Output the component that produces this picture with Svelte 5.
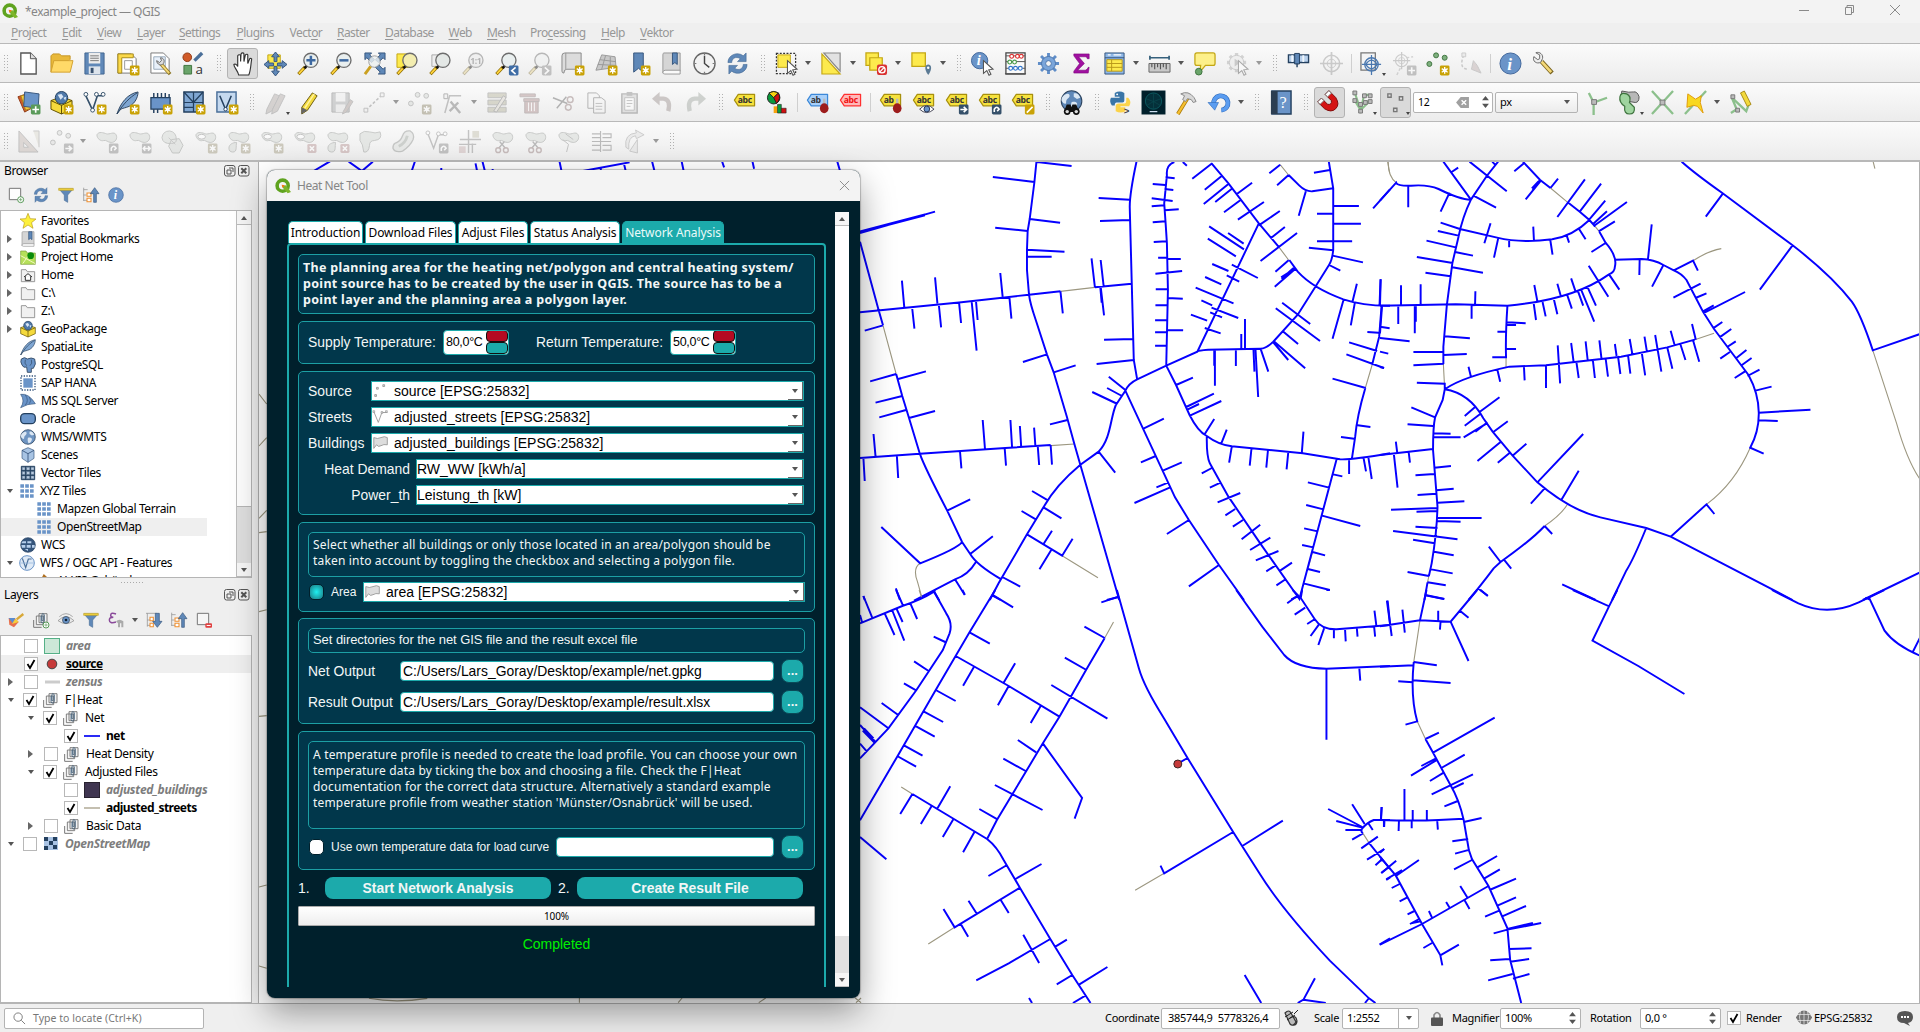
<script>
  // ---- shared icon fragments -------------------------------------------------
  const star = '<rect x="14.5" y="14" width="10" height="10.5" rx="1.5" fill="#c9a206"/><path d="M19.5 15.6v7.2M16.4 17.4l6.2 3.7M22.6 17.4l-6.2 3.7" stroke="#fff" stroke-width="1.4"/><circle cx="19.5" cy="19.2" r="1.9" fill="#fff"/>';
  const red = '<rect x="15" y="14.5" width="9.5" height="9.5" rx="1.5" fill="#d88a8a"/><path d="M17.5 17l4.5 4.5M22 17l-4.5 4.5" stroke="#fff" stroke-width="1.6"/>';
  const badge = (fill, d) => `<rect x="14.5" y="14" width="10" height="10.5" rx="1.5" fill="${fill}"/><path d="${d}" stroke="#fff" stroke-width="1.7" fill="none"/>`;
  const lens = (f = '#e9efef') => `<path d="M8.5 15.5l-7 7.5" stroke="#8a6a00" stroke-width="3.4"/><path d="M7 17l-5 5.5" stroke="#fdd23c" stroke-width="2"/><path d="M8 17l2-2.6" stroke="#111" stroke-width="2.8"/><circle cx="14.5" cy="8.7" r="7.4" fill="${f}" stroke="#6d6d6d" stroke-width="1.4"/>`;
  const blob = '<path d="M2 5C4 1 9 3 12 4s8-3 10 1-1 8-5 8-5-3-8-2-7-2-7-6z" fill="#cfd8cf" stroke="#8d938d" stroke-width="1"/>';
  const smallBlob = '<path d="M2 19c0-4 4-6 8-6-1 4 1 10-4 10-3 0-4-2-4-4z" fill="#cfd8cf" stroke="#8d938d"/>';
  const globe = (c = '#5f88b8') => `<circle cx="12" cy="12" r="9.5" fill="${c}" stroke="#2e4560"/><path d="M6 6c3-2 5 0 4 2s-3 2-3 5-3 1-4-1 1-5 3-6zM14 5c3-1 5 1 6 4l-3 1-3-2zM12 13c3-1 6 0 5 3s-3 4-4 4-2-5-1-7z" fill="#dbe7f3"/>`;
  const cursor = '<path d="M13 9l10 9-4.5.6 2.3 4.6-2 1-2.3-4.8-3.5 3z" fill="#fff" stroke="#555" stroke-width="1.1"/>';
  const tag = (f, s, t, txt = 'abc') => `<path d="M1.5 7.5l4-6h17v12h-17z" fill="${f}" stroke="${s}" stroke-width="1.3" stroke-linejoin="round"/><text x="5" y="11" font-size="9" font-weight="700" font-family="Open Sans" fill="${t}">${txt}</text>`;
  const pin = '<path d="M19 13V8" stroke="#bbb" stroke-width="2.5"/><ellipse cx="19" cy="18" rx="4.5" ry="5.3" fill="#9d1c1c"/>';
  const wrench = '<path d="M10 10l11 12" stroke="#7a6420" stroke-width="4.6"/><path d="M10 10l10 11" stroke="#f4d878" stroke-width="2.8"/><path d="M2 5l4 3 2-1V3L4 .8c4-1.600 8 2 7 6l-2 4c-4 2-9-1-7-6z" fill="#eee" stroke="#666"/>';
  const scissors = '<path d="M9 12l6 7M14 12l-6 7" stroke="#777" stroke-width="1.4"/><circle cx="7.500" cy="21" r="2.500" fill="none" stroke="#a77" stroke-width="1.5"/><circle cx="15.500" cy="21" r="2.500" fill="none" stroke="#a77" stroke-width="1.5"/>';
  const refresh = '<path d="M2 11C2 3 12-1 18 4l3-3v9h-9l3-3c-5-3-9 0-9 4zM22 13c0 8-10 12-16 7l-3 3v-9h9l-3 3c5 3 9 0 9-4z" fill="#5f88b8" stroke="#3e648f" stroke-width=".6"/>';
  const funnel = '<path d="M1.500 3h21l-8 9v11l-5-3v-8z" fill="#5f88b8" stroke="#4a6f99"/><path d="M1 2h22v3H1z" fill="#f2d33d" stroke="#b8981a" stroke-width=".8"/>';
  const info = '<circle cx="12" cy="12" r="11" fill="#6a94c8" stroke="#40659a"/><text x="8.500" y="18.500" font-size="18" font-style="italic" font-weight="700" font-family="Liberation Serif" fill="#fff">i</text>';
  const group = '<path d="M1 12v11h12" fill="none" stroke="#777" stroke-width="1.500"/><path d="M5 6h11v13H5zM9 2.500h12V16H9z" fill="#f4f4f4" stroke="#777" stroke-width="1.400"/><path d="M12 6v9q3 4 5-1V4q-3-4-4 1v8h2V5" fill="none" stroke="#45627c" stroke-width="1.300"/>';
  const target = '<circle cx="12" cy="12" r="8.500" fill="none" stroke="#999" stroke-width="1.600"/><circle cx="12" cy="12" r="4.500" fill="none" stroke="#999"/><path d="M12 0v24M0 12h24" stroke="#999" stroke-width="1.800"/>';
  const grid = '<path d="M2 2h5.500v5H2zM9.300 2h5.500v5H9.300zM16.500 2H22v5h-5.500zM2 9.500h5.500v5H2zM9.300 9.500h5.500v5H9.300zM16.500 9.500H22v5h-5.500zM2 17h5.500v5H2zM9.300 17h5.500v5H9.300zM16.500 17H22v5h-5.500z" fill="#6a94c8"/>';
  const book = '<path d="M4 1h17v19H6q-3 0-3 2V3q0-2 1-2z" fill="#d5d5d5" stroke="#999"/><path d="M3 21q0-2 3-2h15v4H5q-2 0-2-2z" fill="#fafafa" stroke="#999"/>';
  const folder = '<path d="M2 4h7l2 3h11v15H2z" fill="#f0f0f0" stroke="#8a8a8a" stroke-width="1.300"/>';
  const feather = '<path d="M1 24C5 12 12 3 23 1c0 6-4 14-12 16-3 1-5 1-7 3z" fill="#7fa6d2" stroke="#2e4560"/><path d="M1 24C8 13 14 7 22 2" stroke="#2e4560" fill="none"/>';
  const box = '<path d="M1 10l11-4 11 4v9l-11 5L1 19z" fill="#f5da3c" stroke="#5e4d00"/><path d="M1 10l11 5 11-5M12 15v9" fill="none" stroke="#5e4d00"/><circle cx="12" cy="7" r="6.500" fill="#4f79aa" stroke="#24405f"/><path d="M8 4l4-1 2 3-3 3zM14 7l3-1-1 4z" fill="#d8e6f5"/>';

  const I = {
    new: '<path d="M4 1h10l6 6v16H4z" fill="#fff" stroke="#555" stroke-width="1.400"/><path d="M14 1v6h6" fill="#ddd" stroke="#555"/>',
    open: '<path d="M1 21V4l2-2h7l2 2h9v4" fill="#e9b93a" stroke="#c69525"/><path d="M1 21L4 9h20l-3 12z" fill="#ffd968" stroke="#d2a130"/>',
    save: '<path d="M2 1h20v22H2z" fill="#5f88b8" stroke="#42658f"/><path d="M6 1h12v11H6z" fill="#ececec"/><path d="M7.500 4h9M7.500 6.500h9M7.500 9h9" stroke="#777"/><path d="M6 15h12v8H6z" fill="#dde4ec"/><path d="M8 16.500h3V22H8z" fill="#3a5270"/>',
    layout: '<path d="M2 2h14l5 5v15H2z" fill="#fff" stroke="#777"/><path d="M2 2h16v4H6v16H2z" fill="#fbd94a" stroke="#a88a15"/><path d="M9 9h8v9H9z" fill="none" stroke="#999"/>' + star,
    manager: '<path d="M2 1h13l6 6v15H2z" fill="#fff" stroke="#777"/><path d="M5 5h12v13H5z" fill="#e8f0fa" stroke="#9ab"/><path d="M12 12l10 11" stroke="#8c7422" stroke-width="3.600"/><path d="M12 12l9 10" stroke="#f4d878" stroke-width="2"/><path d="M8 9l3 2 2-2-1-3c3 0 5 3 3 6s-7 1-7-3z" fill="#ddd" stroke="#666"/>',
    style: '<circle cx="5.500" cy="5.500" r="4.500" fill="#d05a28" stroke="#8f3a16"/><path d="M13 9l8-8" stroke="#4a6f99" stroke-width="3.500"/><path d="M2 14h8v9H2z" fill="#6aa46a" stroke="#3f743f"/><text x="14" y="23" font-size="14" font-family="Open Sans" fill="#333">a</text>',
    hand: '<path d="M8 24c-1-5-5-8-5-11 1-1 3 0 4 2V4c1-2 3-1 3 0v6l.5-8c1-2 3-1 3 0v8l1.500-7c1-1 3-1 2.500 1v8l2-5c1-1 2.500 0 2 1-1 6-1 12-3 16z" fill="#fff" stroke="#333" stroke-width="1.200"/>',
    panSel: '<path d="M4 3h13v14H4z" fill="#fdea4d" stroke="#c3a613"/><path d="M12 0l4 5h-2.500v5h-3V5H8zM12 25l4-5h-2.500v-5h-3v5H8zM0 13l5-4v2.500h5v3H5V17zM24 13l-5-4v2.500h-5v3h5V17z" fill="#5f88b8" stroke="#35557c"/>',
    zin: lens() + '<path d="M14.500 4v9.500M9.800 8.700h9.500" stroke="#3d68a0" stroke-width="2.600"/>',
    zout: lens() + '<path d="M9.800 8.700h9.500" stroke="#3d68a0" stroke-width="2.600"/>',
    zfull: '<path d="M2 1h7L7 3l5 5-3 3-5-5-2 2zM23 1v7l-2-2-5 5-3-3 5-5-2-2zM23 23h-7l2-2-5-5 3-3 5 5 2-2z" fill="#5f88b8" stroke="#35557c"/><circle cx="12" cy="10" r="6" fill="#edf1f1" opacity=".8" stroke="#888"/><path d="M8 15l-6 8" stroke="#caa020" stroke-width="3"/>',
    zsel: '<path d="M1 2h12v14H1z" fill="#fdea4d" stroke="#c3a613"/>' + lens('#f3edb0'),
    zlayer: '<path d="M3 3h11v12H3z" fill="#eee" stroke="#aaa"/>' + lens('#e4e8e6'),
    znative: lens('#e8e8e8') + '<text x="8.500" y="12.500" font-size="9" font-weight="700" font-family="Open Sans" fill="#666">1:1</text>',
    zlast: lens() + badge('#3f6da6', 'M21.500 16l-4 3.500 4 3.500'),
    znext: lens() + badge('#888', 'M17.500 16l4 3.500-4 3.500'),
    newMap: '<path d="M4 1h17v17H6q-3 0-3 4-2 0-2-2V4q0-3 3-3z" fill="#dcdcdc" stroke="#888"/><path d="M5 1v17" stroke="#999"/>' + star,
    map3d: '<path d="M8 3l14 2 1 11-21 3z" fill="#c8c8c8" stroke="#999"/><path d="M6 8l16 2M4 13l19 1M12 4l-4 14M17 5l0 12" stroke="#999" fill="none"/>' + star,
    bmNew: '<path d="M7 1h10v20l-5-4-5 4z" fill="#5f88b8" stroke="#35557c"/>' + star,
    bm: book + '<path d="M13 1h5v12l-2.500-2-2.500 2z" fill="#5f88b8" stroke="#35557c"/>',
    clock: '<circle cx="12" cy="12" r="11" fill="#f2f2f2" stroke="#666" stroke-width="1.400"/><path d="M12 4v8l5 4" stroke="#444" fill="none" stroke-width="1.500"/><path d="M12 1.500v2M12 20.500v2M1.500 12h2M20.500 12h2" stroke="#777" stroke-width="1.300"/>',
    refresh,
    select: '<path d="M1.500 1.500h20v21h-20z" fill="none" stroke="#333" stroke-width="1.300" stroke-dasharray="2 1.500"/><path d="M3 3h13v13H3z" fill="#fdea4d" stroke="#c3a613"/>' + cursor,
    selExpr: '<path d="M2 2v21h19z" fill="#fdea4d" stroke="#c3a613" stroke-width="1.200"/><path d="M4 1h17v19z" fill="#e2e2e2" stroke="#888" stroke-width="1.200"/>',
    deselect: '<path d="M1 1h13v13H1z" fill="#fdea4d" stroke="#c3a613" stroke-width="1.300"/><path d="M5 6h13v13H5z" fill="#fdea4d" stroke="#c3a613" stroke-width="1.300"/><rect x="12.500" y="13" width="10.500" height="11" rx="2" fill="#d93030"/><circle cx="17.700" cy="18.500" r="3.300" fill="none" stroke="#fff" stroke-width="1.400"/><path d="M15.500 20.700l4.500-4.500" stroke="#fff" stroke-width="1.300"/>',
    selLoc: '<path d="M2 1h14v14H2z" fill="#fdea4d" stroke="#c3a613" stroke-width="1.300"/><path d="M19 24c-5-7-3-11 0-11s5 4 0 11z" fill="#5b7a94"/><circle cx="19" cy="16.500" r="1.300" fill="#fff"/>',
    identify: '<circle cx="9" cy="9" r="8.500" fill="#6a94c8" stroke="#40659a"/><text x="6" y="14" font-size="15" font-style="italic" font-weight="700" font-family="Liberation Serif" fill="#fff">i</text>' + cursor,
    calc: '<path d="M2 23h20V1H2z" fill="#fafafa" stroke="#444" stroke-width="1.300"/><path d="M2 4h20M2 10h20M2 17h20M1 22.500h22" stroke="#555"/><g stroke-width="1.200" fill="#fff"><g stroke="#d33"><circle cx="8" cy="4.500" r="2"/><circle cx="14" cy="4.500" r="2"/><circle cx="18" cy="4.500" r="2"/></g><g stroke="#4a9a4a"><circle cx="6" cy="10.500" r="2"/><circle cx="11" cy="10.500" r="2"/></g><g stroke="#37c"><circle cx="7" cy="17" r="2"/><circle cx="12" cy="17" r="2"/><circle cx="17" cy="17" r="2"/></g></g>',
    gear: '<path d="M12 1v22M1 12h22M4.200 4.200l15.600 15.600M19.800 4.200L4.200 19.800" stroke="#5f8dc8" stroke-width="3"/><circle cx="12" cy="12" r="7.300" fill="#7aa5da" stroke="#4a74aa"/><circle cx="12" cy="12" r="3" fill="#f4f4f4" stroke="#4a74aa"/>',
    sigma: '<path d="M4 2h16v5h-2q0-2-2-2H9l6 7-7 7h8q2 0 3-3h1l-1 6H4v-2l6-8-6-8z" fill="#a010a0" stroke="#780078" stroke-width=".6"/>',
    table: '<path d="M2 1h20v22H2z" fill="#8db6e6" stroke="#35557c"/><path d="M2 6h20" stroke="#35557c"/><path d="M5 3h3M11 3h8" stroke="#fff" stroke-width="1.500"/><path d="M4 8h16v12H4z" fill="#fdea4d" stroke="#b8981a"/><path d="M4 12h16M4 16h16M9 8v12" stroke="#b8981a"/>',
    measure: '<path d="M2 6h20M2 4v4M22 4v4" stroke="#35607c" stroke-width="1.800"/><path d="M1 12h22v9H1z" fill="#c9c9c9" stroke="#666"/><path d="M4 12v4M7 12v6M10 12v4M13 12v6M16 12v4M19 12v6" stroke="#555" stroke-width="1.200"/>',
    tip: '<path d="M4 1h17q2 0 2 2v9q0 2-2 2h-8l-6 7 1-7H4q-2 0-2-2V3q0-2 2-2z" fill="#fdf08a" stroke="#c3a613" stroke-width="1.300"/><circle cx="6" cy="20.500" r="3.500" fill="#6aa46a" stroke="#3f743f"/>',
    action: '<path d="M11 1v20M1 11h20M4 4l14 14M18 4L4 18" stroke="#aaa" stroke-width="3.500"/><circle cx="11" cy="11" r="7.500" fill="#e8e8e8" stroke="#999"/><path d="M9 7l6 4-6 4z" fill="#999"/>' + cursor,
    ruler: '<path d="M1.500 3h21v8h-21z" fill="#b8d0ec" stroke="#24405f" stroke-width="1.400"/><path d="M5.500 3.500v7M17 3.500v7" stroke="#eef5fc" stroke-width="2"/><path d="M8 1.500h5v11H8z" fill="#5f88b8" stroke="#24405f"/><path d="M10.500 12v4" stroke="#24405f" stroke-width="1.500"/>',
    target,
    gps: '<path d="M1 1h15v18H1z" fill="#f4f4f4" stroke="#777" stroke-width="1.300"/><circle cx="12" cy="13" r="7" fill="none" stroke="#4a78b0" stroke-width="1.400"/><path d="M12 3v21M2 13h20M6 13q6-9 12 0q-6 9-12 0" stroke="#4a78b0" stroke-width="1.300" fill="none"/>',
    gpsAdd: '<g transform="scale(.75)">' + target + '</g><path d="M4 24l4-8M14 6l7-1" stroke="#aaa" stroke-width="1.500" stroke-dasharray="3 2"/>' + badge('#888', 'M19.500 15.800v7M16 19.300h7'),
    points: '<g fill="#7fb07f" stroke="#3f743f"><circle cx="3.500" cy="12.500" r="2.600"/><circle cx="10.500" cy="3.500" r="2.600"/><circle cx="19.500" cy="6" r="2.600"/></g>' + star,
    track: '<path d="M5 3Q-1 18 10 18" fill="none" stroke="#999" stroke-width="1.600" stroke-dasharray="3 2"/><path d="M3 1h4v4H3z" fill="#ddd" stroke="#999"/><path d="M15 9l4 5 4 8-10-4z" fill="#caa" stroke="#999"/>',
    info, wrench,
    // second toolbar
    dsm: '<path d="M1 6l9-3 7 14-9 5z" fill="#d05a28" stroke="#8f3a16"/><path d="M4 5l10-2 4 14-9 3z" fill="#f5c93c" stroke="#a8821a"/><path d="M8 1l15 2-1 15-15-2z" fill="#6a94c8" stroke="#35557c"/>' + badge('#5a9a5a', 'M19.500 15.800v7M16 19.300h7'),
    gpkg: box + star,
    shp: '<path d="M3 5l7 15 5-15h6" fill="none" stroke="#35506a" stroke-width="1.700"/><g fill="#fff" stroke="#35506a"><circle cx="3" cy="3.500" r="2"/><circle cx="14" cy="3.500" r="2"/><circle cx="21" cy="3.500" r="2"/><circle cx="10" cy="20" r="2"/></g>' + star,
    feather: feather, spl: feather + star,
    mem: '<path d="M2 7h20v12H2z" fill="#6a94c8" stroke="#24405f" stroke-width="1.300"/><path d="M5 2v5M9 2v5M13 2v5M17 2v5M21 3v4M5 19v4M9 19v4" stroke="#24405f" stroke-width="1.500"/>' + star,
    mesh: '<path d="M2 1h20v21H2z" fill="#7fa6d2" stroke="#24405f" stroke-width="1.500"/><path d="M2 12h20M12 1v21M2 1l10 11L22 1M2 17h10" stroke="#24405f" fill="none" stroke-width="1.300"/>' + star,
    vlayer: '<path d="M2 1h20v21H2z" fill="#c5d9ef" stroke="#4a6f99" stroke-width="1.500"/><path d="M5 5l6 14 6-14" fill="none" stroke="#24405f" stroke-width="1.600"/><circle cx="11" cy="19" r="1.800" fill="#fff" stroke="#24405f"/>' + star,
    pencils: '<path d="M3 19L11 3l5 2-8 16-6 3z" fill="#b9a9a4" stroke="#888"/><path d="M9 19L17 3l5 2-8 16-6 3z" fill="#b9a9a4" stroke="#888"/>',
    pencil: '<path d="M5 17L16 2l5 3-10 15-6 4z" fill="#f2d93c" stroke="#6b5a10"/><path d="M5 17l-.5 7L11 20z" fill="#666"/><path d="M8 18L18 3" stroke="#fff3a0" stroke-width="1.500"/>',
    saveE: '<path d="M2 2h18v20H2z" fill="#a5a9ad" stroke="#777"/><path d="M6 2h10v9H6z" fill="#eee"/><path d="M6 14h10v8H6z" fill="#e4e4e4"/><path d="M14 21l7-12 3 2-7 11-4 2z" fill="#b9988f" stroke="#888"/>',
    line: '<path d="M3 20L20 4" stroke="#888" stroke-width="1.600" stroke-dasharray="3 2"/><path d="M1 18h4v4H1zM18 2h4v4h-4z" fill="#eee" stroke="#888"/>',
    addPt: '<g fill="#d0d8d0" stroke="#888"><circle cx="3" cy="13" r="2.500"/><circle cx="10" cy="4" r="2.500"/><circle cx="19" cy="5" r="2.500"/></g>' + star.replace('#c9a206', '#99894a'),
    vertex: '<path d="M4 23l5-18h12" fill="none" stroke="#888" stroke-width="1.600"/><path d="M3 3h4v5H3z" fill="#eee" stroke="#666"/><path d="M9 21l9-9M10 11l10 12" stroke="#777" stroke-width="2.500"/>',
    formEdit: '<path d="M2 2h19v5H2zM2 9.500h19v5H2zM2 17h19v5H2z" fill="#b9b680" stroke="#888"/><path d="M8 21l10-16 3 2-10 15z" fill="#e0d6c0" stroke="#777"/>',
    trash: '<path d="M1 3h16v3H1zM5 8h16v3H5zM6 11h14v12H6z" fill="#cc8888" stroke="#977"/><path d="M10 12v9M13 12v9M16 12v9" stroke="#fff"/>',
    cut: '<path d="M1 7l15 6M5 18l10-12" stroke="#666" stroke-width="1.500"/><circle cx="19" cy="9" r="3" fill="none" stroke="#a77" stroke-width="1.500"/><circle cx="17" cy="17" r="3" fill="none" stroke="#a77" stroke-width="1.500"/>',
    copy: '<path d="M3 2h9l3 3v13H3z" fill="#f4f4f4" stroke="#666"/><path d="M9 7h8l4 3v13H9z" fill="#f4f4f4" stroke="#666"/><path d="M11 13h7M11 16h7M11 19h7" stroke="#888"/>',
    paste: '<path d="M4 3h16v20H4z" fill="#ccc" stroke="#777" stroke-width="1.500"/><path d="M9 1h6v4H9z" fill="#888"/><path d="M7 7h10v13H7z" fill="#fff" stroke="#888"/><path d="M9 10h6M9 13h6M9 16h4" stroke="#888"/>',
    undo: '<path d="M7 8h6q8 1 5 13" fill="none" stroke="#a8908c" stroke-width="4.500"/><path d="M9 1v14L1 8z" fill="#a8908c"/>',
    redo: '<path d="M17 8h-6q-8 1-5 13" fill="none" stroke="#9caa9c" stroke-width="4.500"/><path d="M15 1v14l8-7z" fill="#9caa9c"/>',
    lab: '<g transform="translate(0 2)">' + tag('#f6e23e', '#a8900e', '#333') + '</g>',
    diag: '<circle cx="8" cy="7" r="6.500" fill="#0a9a3c" stroke="#222"/><path d="M8 7L3 2q5-3 10 0z" fill="#f6d20c" stroke="#222"/><path d="M8 7l5-5q3 6-2 11z" fill="#d01010" stroke="#222"/><path d="M8 23v-7h4v7z" fill="#f6a20c"/><path d="M12 23v-9h4v9z" fill="#0a9a3c" stroke="#222" stroke-width=".6"/><path d="M16 23v-5h5v5z" fill="#d01010" stroke="#222" stroke-width=".6"/>',
    labPin: '<g transform="translate(0 2)">' + tag('#a8d0fa', '#3c88d8', '#333', 'ab') + '</g>' + pin,
    labRed: '<g transform="translate(0 2)">' + tag('#ffb8b8', '#ff3030', '#f01010') + '</g>',
    labPinY: '<g transform="translate(0 2)">' + tag('#f6e23e', '#a8900e', '#333', 'ab') + '</g>' + pin,
    labEye: '<g transform="translate(0 2)">' + tag('#f6e23e', '#a8900e', '#333') + '</g><path d="M8 19q7-8 15 0q-8 7-15 0z" fill="#fff" stroke="#445"/><circle cx="15.500" cy="18.800" r="3" fill="#6a94c8" stroke="#235"/>',
    labMove: '<g transform="translate(0 2)">' + tag('#f6e23e', '#a8900e', '#333') + '</g>' + badge('#35506a', 'M16 19.300h6M19.500 16.500l3 2.800-3 2.800'),
    labRot: '<g transform="translate(0 2)">' + tag('#f6e23e', '#a8900e', '#333') + '</g>' + badge('#35506a', 'M17 22v-3q2.500-4 5 0l-2 2'),
    labEd: '<g transform="translate(0 2)">' + tag('#f6e23e', '#a8900e', '#333') + '</g>' + badge('#c9a206', 'M16.500 22.500l6-6'),
    search: '<g transform="translate(-1.500 -3) scale(1.130)">' + globe('#5f88b8') + '</g><path d="M4 22l3-8h4l1 3 1-3h4l3 8z" fill="#111"/><circle cx="7.500" cy="21.500" r="3.500" fill="#111"/><circle cx="17" cy="21.500" r="3.500" fill="#111"/><circle cx="7.500" cy="21.500" r="1.800" fill="#ddd"/><circle cx="17" cy="21.500" r="1.800" fill="#ddd"/>',
    py: '<path d="M6 2q5-3 10 0v8q0 2-2 2H8q-2 0-2 3H3q-3-4-1-8h9V6H6z" fill="#3a76a8"/><path d="M18 7h2q4 4 1 9h-9v1h5v4q-5 3-10 0v-5q0-3 3-3h6q2 0 2-3z" fill="#fbd34a"/><circle cx="8.500" cy="3.500" r="1" fill="#fff"/><text x="15.500" y="24" font-size="10" font-weight="700" font-family="Liberation Sans" fill="#444">&gt;</text>',
    heat: '<path d="M-.5-.5h25v25h-25z" fill="#00202b"/><circle cx="12" cy="10.500" r="8.500" fill="#04303a" stroke="#0b5a60"/><path d="M12 2v17M4 8l8 3 8-3M5 15l7-4 7 4" stroke="#0b4a50" stroke-width=".7" fill="none"/><path d="M8 21.500h8" stroke="#cde" stroke-width="1.300"/>',
    hammer: '<path d="M3 24L14 6" stroke="#a87808" stroke-width="4"/><path d="M3 24L14 6" stroke="#f6c030" stroke-width="2.500"/><path d="M6 3q8-4 14 4l2 4-3 1-2-3-4-1-2 3-3-2 2-4z" fill="#d8d8d8" stroke="#888"/>',
    reload: '<path d="M6 14A7.500 7.500 0 1 1 14 20" fill="none" stroke="#2c68b8" stroke-width="5"/><path d="M6 14A7.500 7.500 0 1 1 14 20" fill="none" stroke="#5a9cf0" stroke-width="3.800"/><path d="M0 12h11l-4 8z" fill="#5a9cf0" stroke="#2c68b8" stroke-width=".6"/>',
    help: '<path d="M3 0h20v24H3z" fill="#6a94c8" stroke="#24405f" stroke-width="1.500"/><path d="M2 0h7v24H2z" fill="#2c3e52"/><text x="11" y="18" font-size="17" font-family="Liberation Serif" fill="#fff">?</text>',
    magnet: '<g transform="rotate(-45 12 12) translate(12 12) scale(.92) translate(-12 -12)"><path d="M3 2h6v10q3 4 6 0V2h6v11q-2 9-9 9t-9-9z" fill="#d41414" stroke="#7a0808"/><path d="M3 2h6v4H3zM15 2h6v4h-6z" fill="#fff" stroke="#777"/></g>',
    vseg: '<path d="M4 2l6 18 4-17M4 10l6 10 8-8M14 4h7M14 11h7" stroke="#8cc08c" stroke-width="2.200" fill="none"/><g fill="#bbb" stroke="#777"><path d="M2 0h4v4H2zM2 8h4v4H2zM8 19h4v4H8zM12 3h4v4h-4zM18 3h4v4h-4zM13 10h4v4h-4zM18 9h4v4h-4zM8 12h4v4H8z"/></g>',
    pts: '<g fill="#ddd" stroke="#777" stroke-width="1.400"><path d="M4 3h3.500v3.500H4zM16 6h3.500v3.500H16zM10 18h3.500v3.500H10z"/></g>',
    topo: '<path d="M4 2l5 10 14-5M9 12v13" stroke="#8cc08c" stroke-width="2.400" fill="none"/><path d="M7 9h5v5H7z" fill="#bbb" stroke="#777"/>',
    overlap: '<path d="M4 0q8 2 12 1t6 5q0 6-4 6l-6-1-9-5z" fill="#b8b8b8" stroke="#555"/><path d="M2 6q1-5 7-3 5 2 3 9 2 2 5 5 1 7-5 7-6 0-5-8Q1 12 2 6z" fill="#9fd49f" stroke="#3f743f" stroke-width="1.300"/>',
    inter: '<path d="M1 0l22 24M23 0L1 24" stroke="#8cc08c" stroke-width="2.400"/><path d="M9.500 9.500h5v5h-5z" fill="#bbb" stroke="#777"/>',
    trace: '<path d="M23 0L1 24" stroke="#8cc08c" stroke-width="2.400"/><path d="M4 3l8 5.500 6-3.500-1 7 3 11-6-7-4-1-7 2z" fill="#f8d820" stroke="#e09a08"/>',
    selfs: '<path d="M2 23l6-4L3 7l15 14 3-8" stroke="#8cc08c" stroke-width="2.400" fill="none"/><path d="M2 4h4v4H2zM7 18h4v4H7z" fill="#bbb" stroke="#777"/><path d="M12 2l4-2 7 14-4 2z" fill="#f2d93c" stroke="#a88a15"/>',
    // third toolbar
    tri: '<path d="M2 1v22h20zM7 13v5h5z" fill="#d0b4a8" fill-rule="evenodd" stroke="#888"/><path d="M17 1h6v17" fill="#ddd8c0" stroke="#999"/>',
    movePts: '<g fill="#d7dcd7" stroke="#888"><circle cx="3" cy="13" r="2.500"/><circle cx="10" cy="3" r="2.500"/><circle cx="19" cy="6" r="2.500"/></g>' + badge('#888', 'M16 19.300h6M19.500 16.500l3 2.800-3 2.800'),
    rot: blob + badge('#888', 'M17 22v-3q2.500-4 5 0l-2 2'),
    scale: blob + badge('#888', 'M16 19.300h7M18 17l-2 2.300 2 2.300M21 17l2 2.300-2 2.300'),
    simp: '<path d="M1 8q1-7 8-7 7 1 7 9 0 4-5 4-9 1-10-6zM11 10l8-1 4 7-4 8h-7l-4-7z" fill="#cfd8cf" stroke="#8d938d"/><path d="M8 8l7 7" stroke="#999"/>',
    ring: blob + '<ellipse cx="8" cy="7" rx="4" ry="2.500" fill="#fff" stroke="#888"/>' + star.replace('#c9a206', '#a99a60'),
    part: blob + smallBlob + star.replace('#c9a206', '#a99a60'),
    delRing: blob + '<ellipse cx="8" cy="7" rx="4" ry="2.500" fill="#fff" stroke="#888"/>' + red,
    delPart: blob + smallBlob + red,
    reshape: '<path d="M1 4q4-4 10-2t11 0q3 8-6 9-5 0-5 5-1 8-6 7-1-9-4-12z" fill="#cfd8cf" stroke="#8d938d"/>',
    offset: '<path d="M3 14q6-2 8-8t8-5q5 3 3 9-3 7-11 12-8 2-10-3 0-4 2-5z" fill="#d8ded8" stroke="#8d938d" stroke-width="1.400"/><path d="M7 17q7-3 9-11" stroke="#9a9" stroke-width="3" fill="none"/>',
    rev: '<path d="M3 4l6 15 5-14h7" fill="none" stroke="#888" stroke-width="1.500"/><g fill="#fff" stroke="#888"><circle cx="3" cy="3" r="2"/><circle cx="14" cy="4" r="2"/><circle cx="21" cy="4" r="2"/></g>' + badge('#888', 'M17 22v-3q2.500-4 5 0l-2 2'),
    trim: '<path d="M11 0v24M2 10h22M15 14v10M1 15h18" stroke="#888" stroke-width="1.500"/><rect x="15" y="1" width="7" height="7" fill="#c9c09a"/><rect x="1" y="17" width="7" height="7" fill="#daa"/>',
    split: blob + scissors,
    merge: blob + '<path d="M6 10l6 5-2 8M9 4l8 6" stroke="#888" fill="none"/>',
    attr: '<path d="M2 4h9v4H2M13 4h9v4h-9M2 12h20M2 16h9v5H2M13 16h9v5h-9M11 1v22" stroke="#777" fill="none" stroke-width="1.200"/>',
    rotSym: '<path d="M3 18Q1 4 14 3l-1-3 9 5-8 4-1-3Q5 7 6 20zM7 22l8-12v14z" fill="#ddd" stroke="#999"/>',
    // panels
    addLayer: '<path d="M2 2h17v17H2z" fill="#fdfdfd" stroke="#777" stroke-width="1.500"/><circle cx="19" cy="19" r="4.500" fill="#fff" stroke="#5a9a5a" stroke-width="1.500"/><path d="M19 16.500v5M16.500 19h5" stroke="#5a9a5a"/>',
    funnel,
    collapse: '<path d="M1 1v20M1 4h6M1 12h4M1 20h6" stroke="#888" fill="none"/><path d="M6 9h6v5H6zM6 17h6v5H6z" fill="#fff" stroke="#f09030" stroke-width="1.600"/><path d="M16 23V10h-5L17.500 1 24 10h-4v13z" fill="#5f88b8" stroke="#35557c"/>',
    expand: '<path d="M0 2h16M2 2v20M2 12h4M2 20h6" stroke="#888" fill="none"/><path d="M6 8h5v5H6zM6 17h5v5H6z" fill="#fff" stroke="#f09030" stroke-width="1.600"/><path d="M14 2h6v12h4l-7 9-7-9h4z" fill="#5f88b8" stroke="#35557c"/>',
    brush: '<path d="M13 11l10-8" stroke="#d8a838" stroke-width="3.500"/><path d="M1 9l9 0 6 6-7 8-7-4z" fill="#e8704c"/><path d="M1 9l6 8 4-8z" fill="#5a8cd0"/><path d="M6 18l5-8 5 5z" fill="#f5cf3c"/>',
    addGroup: group + '<circle cx="19.500" cy="19.500" r="4.500" fill="#fff" stroke="#5a9a5a" stroke-width="1.500"/><path d="M19.500 17v5M17 19.500h5" stroke="#5a9a5a"/>',
    eye: '<path d="M0 13Q12 1 24 13 12 22 0 13z" fill="#e8e8e8" stroke="#888"/><circle cx="12" cy="12" r="5.300" fill="#6a94c8" stroke="#345"/><circle cx="12" cy="12" r="2" fill="#123"/><path d="M2 7Q12-2 22 7" fill="none" stroke="#aaa" stroke-width="1.500"/>',
    eps: '<path d="M12 3Q4 0 4 5q0 3 4 3-6 0-6 4 0 6 10 3" fill="none" stroke="#8a4a9a" stroke-width="2.200"/><path d="M12 14q5-5 11 0v9h-3v-6h-2v6h-3v-6z" fill="#aaa"/>',
    remove: '<path d="M2 2h17v17H2z" fill="#f6f6f6" stroke="#777" stroke-width="1.500"/><rect x="14" y="17" width="10" height="6.500" rx="1.500" fill="#e04040"/><path d="M16 20.200h6" stroke="#fff" stroke-width="1.500"/>',
    // tree
    fav: '<path d="M12 .5l3.300 8 8.700.5-6.700 5.500 2.200 8.500L12 18l-7.500 5 2.200-8.500L0 9l8.700-.5z" fill="#fdf03c" stroke="#b89a1a"/>',
    home: folder + '<path d="M6 15l6-5 6 5M8 14v6h8v-6" fill="#fff" stroke="#222" stroke-width="1.400"/>',
    proj: '<path d="M1 3h8l2 3h12v17H1z" fill="#b6e05a" stroke="#79993a"/><path d="M1 10l22 12M14 8L4 22" stroke="#f3f7c0" stroke-width="1.500"/><circle cx="16" cy="10" r="5" fill="#0a8a0a"/>',
    folder, gp: box,
    pg: '<path d="M2 3q5-4 9 0 6-3 11 0 3 8-2 14h-3v6h-6l-1-8q-5 2-7-3-3-5-1-9z" fill="#6a94c8" stroke="#2e4560" stroke-width="1.300"/><path d="M8 4q-2 6 2 9M17 4q2 6-2 9" stroke="#2e4560" fill="none"/>',
    hana: '<path d="M5 5h14v14H5z" fill="#6a94c8"/><path d="M1.500 1.500h21v21h-21z" fill="none" stroke="#35557c" stroke-width="2" stroke-dasharray="2 2"/>',
    ms: '<path d="M1 2q12-2 22 14-12 0-22 6Q8 12 1 2z" fill="#6a94c8" stroke="#35557c"/><path d="M8 3q6 8 0 15M14 6q4 6 0 10" fill="none" stroke="#35557c"/>',
    ora: '<rect x="1" y="4" width="22" height="15" rx="6" fill="#6a94c8" stroke="#24405f" stroke-width="2"/>',
    wms: '<g transform="translate(-1.800 -1.800) scale(1.150)">' + globe('#6f95c2') + '</g>',
    scene: '<path d="M12 1l9 4v12l-9 6-9-6V5z" fill="#a8c4e4" stroke="#35557c"/><path d="M3 5l9 5 9-5M12 10v13" fill="none" stroke="#35557c" stroke-width="1.300"/>',
    vt: '<path d="M2 2h20v20H2z" fill="#6f86a0" stroke="#24405f" stroke-width="1.500"/><path d="M2 8.500h20M2 15.500h20M8.500 2v20M15.500 2v20" stroke="#24405f" stroke-width="1.500"/><path d="M4 4h3v3H4zM10.500 4h3.500v3h-3.500zM17 4h3.500v3H17zM4 10.500h3v3H4zM10.500 10.500h3.500v3h-3.500zM17 10.500h3.500v3H17zM4 17h3v3H4zM10.500 17h3.500v3h-3.500zM17 17h3.500v3H17z" fill="#b8cade"/>',
    xyz: grid,
    wcs: '<circle cx="12" cy="12" r="11" fill="#35557c" stroke="#24405f"/><path d="M4 6.500h5v3H2zM11 6.500h6v3h-6zM2 12h6v4H3zM10 12h6v4h-6zM18 12h4v4h-4zM7 18h5v3z" fill="#b8d0ec"/>',
    wfs: '<circle cx="12" cy="12" r="11" fill="#dfeaf6" stroke="#6a94c8" stroke-width="1.500"/><path d="M5 5l5 14 4-13h5" fill="none" stroke="#4a6f99" stroke-width="1.800"/><path d="M2 12h20" stroke="#8fb0d8"/>',
    elbow: '<path d="M2 22l10-18 9 8" stroke="#b07020" stroke-width="3" fill="none"/>',
    group,
    qgis: '<circle cx="11.500" cy="11.500" r="8.300" fill="none" stroke="#5fa31f" stroke-width="5.400"/><path d="M12 12l4-1 8 10-5 2-7-8z" fill="#7cb52a"/><path d="M10 10l5 1-4 4z" fill="#ee7913"/>',
  };

  // ---- toolbars ----------------------------------------------------------------
  // "|" is a drag handle, "/" a separator, a trailing "v" opens a menu beside the
  // button, "~" disables it, "!" marks it checked, "." puts a menu tick inside it
  const row1 = 'new open save layout manager style | hand! panSel zin zout zfull zsel zlayer znative~ zlast znext~ newMap map3d bmNew bm clock refresh | selectv selExprv deselectv selLocv | identify calc gear sigma tablev measurev tip action~v | ruler target~ / gps. gpsAdd~ points track~ / info wrench'.split(' ');
  const row2a = 'dsm gpkg shp spl mem mesh vlayer | pencils~. pencil saveE~ line~v addPt~ vertex~v formEdit~ trash~ cut~ copy~ paste~ undo~ redo~ | lab diag / labPin labRed / labPinY labEye labMove labRot labEd | search | py heat hammer reloadv | help | magnet! vseg. pts!.'.split(' ');
  const row2b = 'topo overlap. inter tracev selfs'.split(' ');
  const row3 = 'tri~ movePts~v rot~ scale~ simp~ ring~ part~ ring~ delRing~ delPart~ reshape~ offset~ rev~ trim~ split~ split~ merge~ attr~ rotSym~v |'.split(' ');

  const parse = (t) => ({
    name: t.replace(/[~!.]|v$/g, ''),
    menu: /v$/.test(t) && !I[t],
    off: t.includes('~'), on: t.includes('!'), tick: t.includes('.')
  });

  const menus = [['', 'P', 'roject', 51], ['', 'E', 'dit', 35], ['', 'V', 'iew', 40], ['', 'L', 'ayer', 42], ['', 'S', 'ettings', 57.5], ['', 'P', 'lugins', 53], ['Vect', 'o', 'r', 47.500], ['', 'R', 'aster', 48], ['', 'D', 'atabase', 63.500], ['', 'W', 'eb', 38.500], ['', 'M', 'esh', 43], ['Pro', 'c', 'essing', 71], ['', 'H', 'elp', 39], ['', 'V', 'ektor', 50]];

  const browser = [
    ['', 'fav', 'Favorites'], ['r', 'bm', 'Spatial Bookmarks'], ['r', 'proj', 'Project Home'], ['r', 'home', 'Home'],
    ['r', 'folder', 'C:\\'], ['r', 'folder', 'Z:\\'], ['r', 'gp', 'GeoPackage'], ['', 'feather', 'SpatiaLite'],
    ['', 'pg', 'PostgreSQL'], ['', 'hana', 'SAP HANA'], ['', 'ms', 'MS SQL Server'], ['', 'ora', 'Oracle'],
    ['', 'wms', 'WMS/WMTS'], ['', 'scene', 'Scenes'], ['', 'vt', 'Vector Tiles'], ['d', 'xyz', 'XYZ Tiles'],
    ['', 'xyz', 'Mapzen Global Terrain', 1], ['', 'xyz', 'OpenStreetMap', 1, 1], ['', 'wcs', 'WCS'],
    ['d', 'wfs', 'WFS / OGC API - Features'], ['r', 'elbow', 'ALKIS Gebäude', 1]
  ];

  // arrow, indent level, checked, symbol, label, style class
  const layers = [
    ['', 0, 0, 'area', 'area', 'it'], ['', 0, 1, 'dot', 'source', 'bu'], ['r', 0, 0, 'gline', 'zensus', 'it'],
    ['d', 0, 1, 'group', 'F|Heat', ''], ['d', 1, 1, 'group', 'Net', ''], ['', 2, 1, 'bline', 'net', 'b'],
    ['r', 1, 0, 'group', 'Heat Density', ''], ['d', 1, 1, 'group', 'Adjusted Files', ''],
    ['', 2, 0, 'dark', 'adjusted_buildings', 'it'], ['', 2, 1, 'sline', 'adjusted_streets', 'b'],
    ['r', 1, 0, 'group', 'Basic Data', ''], ['d', 0, 0, 'osm', 'OpenStreetMap', 'it']
  ];

  // ---- map geometry, one tile per block ---------------------------------------
  const tiles = [
    { x: 260, y: 160, sx: 610 / 1568, net: 'M138 33L180 4M228 5L262 33L290 5M398 5L390 33M466 24V33M554 10L558 33M572 5L578 33M598 27V33M770 5L775 33M830 33L950 7M876 22V33M935 8L940 33M1008 5L1014 33M1084 5L1089 33M1188 5L1193 22M1266 5L1270 26M1484 5L1491 33', old: '' },
    {
      x: 860, y: 160, sx: 530 / 1568,
      net: `M522 5L516 66L502 177L496 213L494 270V330L500 404Q503 430 520 480L553 583L573 637L612 770L634 851L652 915L767 1320
M524 6L626 18M393 51L516 66M502 177L592 188M400 203L496 213M494 269L605 275M494 290H567M553 583L482 606M573 637L638 616M562 793L614 780
M0 217L192 166M0 214L192 163M0 219L222 155M0 245L55 450L68 496M0 457L300 427L500 404L593 394M695 382L804 371M124 362L131 442M222 352L229 430M415 339L422 410M154 441L161 506M233 432L240 502M293 427L299 489M330 421L345 572M343 421L348 480M442 412L448 476M593 394L600 460M685 295L695 382M712 300L721 380M712 380L722 466M711 382L715 428M68 496L14 512
M107 642L125 708L145 774L177 881Q190 920 258 1052L302 1146L326 1182Q345 1215 418 1258M30 664L107 642M113 657L195 634M46 728L125 708M57 772L136 750M145 774L222 753M258 1052L326 1018M326 1182L393 1129M302 1146Q290 1165 178 1210L63 1101
M0 894L177 881L430 864L564 855M40 822L46 890M10 893L14 963M109 886L113 954M296 876L300 925M363 780L370 870M428 864L432 917M445 780L450 864M473 798L477 862M515 803L519 860M526 860L530 915M564 855L568 914
M818 5Q798 100 798 140L804 370L810 600L820 658M706 114L798 119M710 183L798 180M722 539L809 537M700 612L810 600
M930 6Q905 15 908 45L900 130Q905 200 908 250L911 390L906 617M820 658L906 617L998 575L1180 190M955 6L967 17M866 72L903 75M904 52L931 55M901 87L927 90M863 115L925 123M863 139L901 136M901 151L943 148M866 187L905 184M869 246L907 244M882 293H909M909 297H949M874 341L953 333M875 388H910M910 414L955 416M874 436H909M873 481H908M908 510L956 511M873 517H907M873 557H906
M1040 10L1090 70L1180 190L1240 262M1270 300L1295 335Q1340 385 1430 418Q1490 438 1568 437M1042 10L983 56M1070 48L1020 89M1090 72L1017 132M1100 86L1051 126M1160 68L1115 102M1126 120L1077 157M1195 126L1118 179M1242 153L1180 196M1257 201L1215 235M1293 219L1185 303M1268 301L1229 335M1286 321L1247 356M1288 325L1246 352M1290 325L1227 380M1243 14L1211 40M1268 45L1234 76M1268 45L1300 77Q1318 95 1338 94L1400 85M1319 94L1298 167
M1387 5L1400 85V270Q1397 300 1388 314L1345 384L1295 464L1222 546Q1200 566 1185 566L1030 569Q1000 571 998 575M1343 38L1390 30M1400 138H1476M1352 161H1400M1400 191H1482M1352 244H1456M1328 263L1400 271M1398 287L1488 307M1388 315L1421 332M1249 428L1332 492M1230 445L1361 543M1250 513L1296 552M1222 546L1267 600M1226 545L1317 625M1185 566L1208 635
M1033 199L1136 268M1089 219L1135 251M1029 236L1112 289M1100 314L1177 354M1042 312L1090 333M1021 351L1069 373M1085 346L1122 365M993 383L1105 430M1010 421L1042 436M1040 443L1119 474M1036 457L1071 472M979 464L1027 482M1020 504L1067 520M1048 569V617M1050 569V677M1112 569V618M1128 522V569M1139 477V569M1164 567L1167 635M1170 567L1178 711
M820 658Q795 670 785 692L757 735C740 775 743 835 706 875L652 914Q580 975 545 1038L494 1123L410 1270L384 1320M736 650L785 690M731 684L775 708M687 696L762 732M706 875L755 938M509 993L556 1021M543 1042L596 1075M478 1053L520 1078M494 1123L598 1187L629 1136M543 1152L568 1112M568 1166L531 1228M421 1251L474 1280M391 1306L416 1320
M785 692L932 1012L973 1080L1062 1215L1136 1320M899 776L840 805M875 888L831 907M896 932L952 907M911 968L877 982M916 983L812 1029M973 1080L908 1122M1062 1215L973 1279M730 1320L765 1311
M906 617L935 675L975 765Q1000 815 1026 828Q1060 854 1100 859L1310 880L1420 898Q1455 900 1568 880M985 653L935 675M1047 701L965 741M1003 732L970 748M1069 723L976 767M1048 777L1020 822M1085 809L1069 850M1100 859L1092 908M1158 867L1153 917M1207 870L1202 923M1267 877L1262 928M1312 815L1307 880
M1026 828Q1025 890 1035 910L1090 1010L1184 1150L1300 1317L1410 898M1011 940L1041 924M1035 983L1068 967M1058 1027L1125 999M1081 1066L1110 1047M1103 1100L1133 1080M1129 1138L1184 1094M1154 1170L1214 1133M1171 1201L1238 1173M1202 1234L1230 1216M1278 1208L1243 1232M1232 1276L1260 1257M1276 1318L1297 1308
M1400 943L1427 949M1325 967L1388 983M1320 1035L1371 1048M1367 1067L1480 1098M1314 1105L1354 1114M1308 1155L1341 1162M1339 1176L1376 1186M1325 1227L1361 1236M1315 1271L1390 1290
M1543 438L1536 530L1515 615M1495 684Q1470 770 1465 830L1455 898M1431 418L1398 536M1470 371L1457 425M1464 428L1452 496M1540 358L1537 437M1501 516L1534 518M1447 547L1530 573M1439 583L1550 624M1398 656L1496 684M1467 795L1510 801M1423 831L1462 836M1447 899V942M1490 895L1497 934M1504 892L1514 957M1568 88L1518 145
M343 1206Q320 1245 281 1258L160 1322M281 1258L310 1305M106 1285L118 1320M218 1292L235 1322M10 1308L14 1320`,
      old: 'M593 394L695 382M68 496L107 642M564 857L634 852M178 1210Q155 1225 170 1265L183 1312M598 1187L704 1253M1240 262L1268 300M1243 14L1268 45M1515 615L1495 684M1339 1176L1325 1227M1561 5L1567 40'
    },
    {
      x: 1380, y: 160, sx: 540 / 1568,
      net: `M0 122L47 68Q50 78 90 77Q140 73 170 87Q235 120 264 119Q240 170 228 230L210 310L194 436L184 560V612M82 77V142M202 98L176 155M184 5L264 119M208 36L227 23M326 5L334 14M260 5L368 94M343 5L310 48L264 119M270 106L337 143
M176 188L232 207M168 213L228 227M135 242L220 262M107 291L211 309M132 338L205 349M218 276L270 287M210 322L299 338
M232 207L340 233Q410 250 500 238Q560 228 608 180M321 190L303 250M343 236L331 293M375 240V262M445 200L447 242M494 237L501 284M542 226L549 248M578 207L597 238
M415 5L465 60L495 84M545 127L580 155L608 180L625 200M637 215L655 248Q690 290 682 320Q682 335 665 343Q560 420 370 437L220 433L0 437M418 10L390 34M463 62L443 90M460 64L441 85M467 62L423 118M517 56L495 84M595 58L515 171M642 71L580 155M654 122L608 178M717 126L620 199M659 154L618 193M682 184L635 214M655 249L614 276M606 317L663 410M665 343L695 389M555 355L567 392M515 371L525 408M448 375L457 424M446 428L453 480M472 426L481 469M504 414L515 463M543 403L557 446M575 394L590 437M584 389L622 485M602 380L627 437
M682 299L760 297Q795 298 823 315L853 331Q875 340 890 360L938 455L970 507L1070 645C1110 720 1108 800 1075 863L1114 881M789 193L778 298M754 298L753 345M823 315L790 380M853 331L909 302L923 332M852 413L931 371M916 414L948 400M938 460L1060 396M938 454L969 436M967 505L994 486M986 532L1020 507M1008 561L1033 544M1032 596L1064 570M988 596L1016 576M1047 618L1079 594M1030 654L1060 634M1067 648L1102 629M1090 692L1137 680M1100 758L1250 749M1100 781L1155 783
M2 358L0 436M61 376V437M118 373V437M53 437V492M101 437V520M104 437V485M277 394L276 435L266 436V476M6 437L0 520M0 500L28 505M0 534L86 544M0 575L24 581M0 621L12 624
M370 437Q364 530 366 592H326M370 487L423 490M368 495H395M341 515H367M365 567H395M188 529L261 535M97 576H184M184 585L252 582M97 616L185 611M107 668L188 671V688L182 720L160 772Q154 800 154 870L167 1040Q165 1120 150 1210L142 1248M138 1267L129 1320
M188 688Q240 650 376 620L482 616L700 590L834 562L914 539M257 620L264 650M341 630L349 665M418 620L420 661M482 617V684M516 556L523 670M555 549L562 604M570 604L577 654M597 544L603 600M618 600L624 654M637 541L643 595M655 594L662 650M682 552L687 588M691 588L698 642M725 537L733 584M720 584L727 641M760 578L770 646M768 530L775 575M799 525L817 635M834 562L849 626M844 512L856 557M872 552L887 600M906 492L917 539M909 541L927 605
M188 688Q260 700 300 775L327 815L385 887L457 967Q550 1050 640 1072L773 1104L844 1130L1198 1320M277 740L246 768M347 712L290 755M290 763L246 797M312 787L277 815M310 790L243 832M371 784L330 815M350 846L283 903M425 851L385 887M377 878L342 908M590 822L457 967M478 985L438 1031M577 932L526 1021M844 1130L948 1033L971 1062M773 1104Q735 1200 715 1232L674 1320M529 1273L626 1320
M91 742L160 772M80 793L154 798M155 820L205 821M155 832H234M0 885L154 867M46 845L50 878M40 880L51 983M83 874L87 908M158 923L206 918M103 946L158 942M163 991L214 986M109 1005L164 1001M168 1028L245 1024M32 1049L167 1044M106 1055L166 1053M167 1073L295 1074M167 1083L234 1085M103 1100L167 1104M38 1113L225 1138M96 1139L159 1150M157 1175L214 1186M149 1228L211 1240M80 1236L142 1248M138 1267L191 1276M132 1306L186 1317
M478 1098Q440 1140 350 1206L330 1225Q290 1280 257 1320M478 1098L500 1122M316 1160L350 1206M360 1199L381 1226M284 1285L313 1307
M876 5Q910 37 994 99L1198 256Q1310 345 1370 425Q1395 460 1431 571L1568 522M996 100L946 170M1198 256L1103 389M1568 1237L1402 1320M1410 1313L1421 1318`,
      old: 'M24 5Q23 50 47 68M495 84L545 127M625 200L637 215M909 302Q955 272 991 266M914 539L970 520M366 592V622M184 612L187 671M142 1248L138 1267M1075 863Q1030 970 948 1033M543 1035Q525 1065 478 1098M1431 571L1500 790Q1530 900 1568 958M1432 5L1437 26'
    },
    {
      x: 860, y: 590, sx: 530 / 1568,
      net: `M0 100L125 48Q180 30 219 5L255 70Q275 100 265 130L245 180L167 300L84 415L0 505M10 18L37 85M0 75L6 96M107 0L127 46M303 0L310 14M72 68L102 135M95 60L131 152M108 56L126 96M148 38L169 87M219 5L222 0M218 140L252 156M160 214L203 243M130 280L166 301M64 339L112 374M0 352L84 415M0 405L47 457M8 422L44 459M0 461L20 484M12 415L40 445
M400 0L324 127L224 300L110 500L0 691M391 14L453 52M324 127L384 161M224 300L283 333M188 364L246 396M162 407L221 440M130 466L185 497M110 498L166 530
M283 198L440 288L590 380M337 231L305 287M459 220L424 280M440 288L408 346M535 347L505 399M724 144L670 238L590 380L541 460L405 690L376 747M664 110L724 144M606 203L670 240M566 285L732 386M541 460L657 624L635 686M467 450L521 487M424 506L490 543M399 585L540 660M353 657L408 689
M155 612L376 747Q405 770 425 810L473 893L563 1047L628 1155L682 1239M155 612L119 672M267 589L228 657M212 648L180 702M277 686L245 741M339 725L305 787M0 741L78 808M435 825L380 858M537 822L460 867M473 893L280 1012L247 957M321 932L346 972M415 928L440 969M298 1002L320 1040M563 1047L440 1120L344 1171M483 1034L530 1119M578 1070L612 1049M628 1155L582 1183M732 1131L648 1184M668 1216L630 1239M500 1224L509 1239
M760 0L825 235Q840 290 900 386L969 504L1104 726L1185 855Q1250 960 1390 1112L1506 1225L1525 1239M765 20L714 37M969 504L940 521M1104 726L900 850L889 827M1251 692L1131 768M1506 1224L1494 1239M1138 1155L1187 1239M1346 1165L1312 1229L1295 1239M1312 1229L1378 1239
M1113 0L1190 110L1255 195Q1290 235 1380 236L1568 228M1380 236V449M1477 232L1480 272
M1280 0L1304 24L1345 87Q1365 119 1410 118L1568 105M1304 24L1308 0M1290 20L1264 40M1317 53L1286 74M1346 87L1323 102M1358 103L1333 138M1373 115L1356 165M1402 118V145M1435 118L1437 154M1470 116L1472 140M1522 62L1528 110M1521 110L1524 140M1561 32L1568 100M1380 0H1390
M1568 690L1520 690Q1500 698 1486 715Q1480 725 1488 730M1385 657L1486 711M1409 693L1486 713M1436 720H1486M1456 643L1493 702M1503 698L1517 720M1543 651L1541 690M1550 690V711M1488 730L1456 749M1507 760L1568 837M1532 740L1483 775M1551 777L1500 809M1542 810L1525 826M1566 830L1542 849M1568 862L1557 870M1568 1045L1537 1064`,
      old: 'M175 0L182 22M750 96L724 144M122 591L155 612M280 1012L202 1062M900 850L814 901M1488 730L1507 760'
    },
    {
      x: 1380, y: 590, sx: 540 / 1568,
      net: `M0 109L116 91L205 95L282 0M116 91L135 0M20 32L34 138M65 59L72 128M169 62V93M176 93L174 119M132 15L187 27M232 62L257 83M292 0L313 18M205 95L257 213M98 216Q88 320 108 394L74 404M0 230L98 226M98 216L165 226M53 274L95 277M95 271L205 279
M132 447L155 490L205 586Q230 630 243 690L258 780L267 807L315 888L370 1015L378 1110L410 1239M171 428L132 447M333 383L154 488M163 505L120 528M163 511L90 557M246 494L178 534M186 547L145 573M270 553L150 613M243 579L209 596M226 633L187 649M295 684L243 696
M0 690Q100 693 170 690L243 686M5 651L3 690M13 690L12 711M55 692L54 723M71 597V692M95 660V692M92 692V715M136 660V690M166 690L168 719
M256 747L210 754M261 779L218 791M267 810L215 838M340 798L283 832M348 838L302 866M395 866L318 900M395 922L341 947M424 948L355 979M346 962L305 980M468 999L370 1019L330 1030M444 999L370 1017M374 1077L440 1075M320 1111L376 1107M433 1107L378 1115M385 1152L314 1171M434 1152L386 1166
M315 888L122 1002L0 1064M233 888L255 925M244 928L260 957M192 936L203 955M142 963L152 985M0 800L46 857L122 1002L175 1095L181 1126M12 777L0 788M47 812L4 849M0 810L8 812M64 840L18 868M113 810L46 858M57 882L34 894M78 923L57 934M100 963L80 973M112 988L87 1002M118 994L90 1000M151 1059L126 1074M229 1064L175 1096
M560 0L665 49L689 0M665 49L617 152L750 228L884 312M1138 0L1215 40Q1300 80 1390 37L1464 0M1420 23L1465 122Q1495 165 1568 197M1568 143L1547 186`,
      old: 'M116 91L98 216M108 394L132 447'
    },
    { x: 250, y: 155, sx: 1 / 3, net: '', old: 'M27 717L50 747M27 873L50 848M27 1090L50 1066M27 1133L50 1130M27 1370L50 1364M27 1684L50 1682M27 2196L50 2190M27 2433L50 2440' },
    { x: 260, y: 510, sx: 610 / 1568, net: '', old: 'M280 1465Q350 1480 430 1465M821 1464V1478M1085 1464L1075 1478M1300 1464L1282 1478M1530 1464L1545 1478M1545 1464L1532 1478' }
  ];

  const combos = [['Source', 'pt', 'source [EPSG:25832]', 0], ['Streets', 'ln', 'adjusted_streets [EPSG:25832]', 0], ['Buildings', 'pg', 'adjusted_buildings [EPSG:25832]', 0], ['Heat Demand', '', 'RW_WW [kWh/a]', 1], ['Power_th', '', 'Leistung_th [kW]', 1]];
</script>

{#snippet icon(name, cls = '')}
  <svg class="ic {cls}" viewBox="0 0 24 24">{@html I[name]}</svg>
{/snippet}

{#snippet tools(items)}
  {#each items as t}
    {#if t === '|'}
      <span class="handle"></span>
    {:else if t === '/'}
      <span class="sep"></span>
    {:else}
      {@const p = parse(t)}
      <span class="tool" class:off={p.off} class:on={p.on} class:menu={p.menu}>
        {@render icon(p.name)}
        {#if p.menu}<i class="caret"></i>{/if}
        {#if p.tick}<i class="tick"></i>{/if}
      </span>
    {/if}
  {/each}
{/snippet}

{#snippet panelHead(title)}
  <div class="phead">
    <span>{title}</span>
    <svg viewBox="0 0 26 12"><rect x=".5" y=".5" width="10.500" height="10.500" rx="2" /><path d="M3 5h4v4H3zM5 3h4v4" /><rect x="14.500" y=".5" width="10.500" height="10.500" rx="2" /><path class="x" d="M17.300 3.300l5 5M22.300 3.300l-5 5" /></svg>
  </div>
{/snippet}

{#snippet sym(k)}
  <svg class="lsym" viewBox="0 0 20 20">
    {#if k === 'pt'}<path d="M3 14h2v2H3zM5 6h2v2H5zM12 3h2v2h-2z" fill="#ddd" stroke="#888" stroke-width=".8" />
    {:else if k === 'ln'}<path d="M2 4l5 12 4-11h6" fill="none" stroke="#999" /><path d="M1 3h2v2H1zM10 4h2v2h-2zM15 3h2v2h-2z" fill="#ddd" stroke="#888" stroke-width=".6" />
    {:else}<path d="M2 4q4 2 8 0t7 0v8q-4-1-7 1t-5-1l-3 4z" fill="#ddd" stroke="#999" />{/if}
  </svg>
{/snippet}

{#snippet combo(k, label)}
  <div class="combo">
    {#if k}{@render sym(k)}{/if}<span>{label}</span><b><i class="caret"></i></b>
  </div>
{/snippet}

{#snippet spin()}
  <svg class="updown" viewBox="0 0 8 14"><path d="M0 5l4-5 4 5zM0 9h8l-4 5z" /></svg>
{/snippet}

<div class="app">
  <div class="title">
    {@render icon('qgis', 'logo')}<span class="tt">*example_project — QGIS</span>
    <svg class="win" viewBox="0 0 110 14"><path d="M1 7.500h10M47.500 4.500h6v7h-6zM49 4V2.500h6.500v7H54M92 2l10 10M102 2L92 12" /></svg>
  </div>
  <div class="menubar">
    {#each menus as [a, u, b, w]}<span style:width="{w}px">{a}<u>{u}</u>{b}</span>{/each}
  </div>
  <div class="toolbar"><span class="handle first"></span>{@render tools(row1)}</div>
  <div class="toolbar">
    <span class="handle first"></span>{@render tools(row2a)}
    <div class="field tol"><span>12</span><svg viewBox="0 0 14 12"><path d="M5 0h9v12H5L0 6z" /><path class="w" d="M6 3.500l5 5M11 3.500l-5 5" /></svg>{@render spin()}</div>
    <div class="field unit"><span>px</span><i class="caret"></i></div>
    {@render tools(row2b)}
  </div>
  <div class="toolbar last"><span class="handle first"></span>{@render tools(row3)}</div>

  <div class="main">
    <aside>
      {@render panelHead('Browser')}
      <div class="ptools">{#each ['addLayer', 'refresh', 'funnel', 'collapse', 'info'] as n}{@render icon(n)}{/each}</div>
      <div class="tree browser">
        <div class="rows">
          {#each browser as [arrow, ic, label, deep, sel]}
            <div class="row" class:deep class:sel><i class="tri {arrow}"></i>{@render icon(ic)}<span>{label}</span></div>
          {/each}
        </div>
        <div class="scroll"><b><i class="up"></i></b><em></em><b><i class="caret"></i></b></div>
      </div>
      <div class="split"></div>
      {@render panelHead('Layers')}
      <div class="ptools lay">
        {#each ['brush', 'addGroup', 'eye', 'funnel', 'eps'] as n}{@render icon(n)}{/each}
        <i class="caret"></i>
        {#each ['expand', 'collapse', 'remove'] as n}{@render icon(n)}{/each}
      </div>
      <div class="tree layers">
        {#each layers as [arrow, level, on, s, label, cls]}
          <div class="lrow {cls} lv{level}" class:selected={label === 'source'}>
            <i class="tri {arrow}"></i>
            <svg class="check" viewBox="0 0 14 14"><rect x=".5" y=".5" width="13" height="13" />{#if on}<path d="M3.500 7l2.500 4 4.500-8" />{/if}</svg>
            <svg class="sym" viewBox="0 0 16 16">
              {#if s === 'area'}<rect x=".5" y=".5" width="15" height="15" fill="#cce8d8" stroke="#55b087" />
              {:else if s === 'dot'}<circle cx="8" cy="8" r="4.800" fill="#c63a3a" stroke="#444" />
              {:else if s === 'gline'}<path d="M1 8h15" stroke="#ccc" stroke-width="3" />
              {:else if s === 'bline'}<path d="M0 8h16" stroke="#2a2af5" stroke-width="2" />
              {:else if s === 'sline'}<path d="M0 8h16" stroke="#c4bfb0" stroke-width="2" />
              {:else if s === 'dark'}<rect x=".5" y=".5" width="15" height="15" fill="#3f3550" stroke="#28222f" />
              {:else if s === 'osm'}<path d="M1 1h14v13H1z" fill="#a9c3e4" /><path d="M1 1h4v4H1zM10 1h4v4h-4zM6 5h4v4H6zM1 10h4v4H1zM10 9h4v4h-4z" fill="#24405f" />
              {:else}<svg viewBox="0 0 24 24">{@html I.group}</svg>{/if}
            </svg>
            <span>{label}</span>
          </div>
        {/each}
      </div>
    </aside>

    <div class="map">
      <svg viewBox="259 162 1660 841">
        {#each tiles as t}
          <g transform="translate({t.x} {t.y}) scale({t.sx} {1 / 3})">
            <path class="old" d={t.old} />
            <path class="net" d={t.net} />
          </g>
        {/each}
        <circle cx="1177.800" cy="764" r="4" fill="#c63a3a" stroke="#3c2626" />
      </svg>
    </div>
  </div>

  <footer>
    <div class="field loc"><svg viewBox="0 0 14 14"><circle cx="5.500" cy="5.500" r="4.500" /><path d="M9 9l4 4" /></svg><span>Type to locate (Ctrl+K)</span></div>
    <div class="status">
      <span class="s1">Coordinate</span>
      <div class="field coord">385744,9&nbsp; 5778326,4</div>
      <svg class="mouse" viewBox="0 0 16 16"><path d="M1 3q4-4 6 0l5 9q-3 5-6 2zM6 8q6-4 7 3 0 5-5 4" fill="#bbb" stroke="#333" stroke-width="1.200" /><path d="M1 7l8-5M3 10l8-5M10 4l4-4" stroke="#222" /></svg>
      <span class="s2">Scale</span>
      <div class="field scale"><span>1:2552</span><b><i class="caret"></i></b></div>
      <svg class="lock" viewBox="0 0 12 15"><path d="M3 7V4q3-5 6 0v3" fill="none" stroke="#888" stroke-width="1.600" /><rect y="6.500" width="12" height="8.500" rx="1" fill="#555" /></svg>
      <span class="s3">Magnifier</span>
      <div class="field mag"><span>100%</span>{@render spin()}</div>
      <span class="s4">Rotation</span>
      <div class="field rotn"><span>0,0 °</span>{@render spin()}</div>
      <svg class="check" viewBox="0 0 14 14"><rect x=".5" y=".5" width="13" height="13" /><path d="M3.500 7l2.500 4 4.500-8" /></svg>
      <span class="s5">Render</span>
      <svg class="crs" viewBox="0 0 16 16"><circle cx="8" cy="7.500" r="6.500" fill="#777" stroke="#666" /><path d="M0 7.500h16" stroke="#777" stroke-width="2" /><path d="M1 4.500h13M2 10.500h12M8 0v15M4.500 1q-2 6 0 12M11.500 1q2 6 0 12" stroke="#eee" stroke-width=".7" fill="none" /></svg>
      <span class="s6">EPSG:25832</span>
      <svg class="msg" viewBox="0 0 16 15"><path d="M8 0q8 0 8 6 0 5-5 6l2 3-6-3Q0 12 0 6 0 0 8 0z" fill="#555" /><path d="M4 5h2v2H4zM7 5h2v2H7zM10 5h2v2h-2z" fill="#fff" /></svg>
    </div>
  </footer>

  <section class="dialog">
    <header>{@render icon('qgis', 'logo')}<span>Heat Net Tool</span><svg class="close" viewBox="0 0 12 12"><path d="M1 1l10 10M11 1L1 11" /></svg></header>
    <div class="body">
      <div class="content">
        <nav><span class="t1">Introduction</span><span class="t2">Download Files</span><span class="t3">Adjust Files</span><span class="t4">Status Analysis</span><span class="t5 active">Network Analysis</span></nav>
        <div class="pane">
          <div class="panel p1">The planning area for the heating net/polygon and central heating system/<br />point source has to be created by the user in QGIS. The source has to be a<br />point layer and the planning area a polygon layer.</div>
          <div class="panel p2">
            <span class="lb">Supply Temperature:</span><div class="temp"><span>80,0°C</span><div><i></i><i></i></div></div>
            <span class="lb second">Return Temperature:</span><div class="temp"><span>50,0°C</span><div><i></i><i></i></div></div>
          </div>
          <div class="panel p3">
            {#each combos as [l, k, v, deep]}
              <div class="crow" class:deep><span>{l}</span>{@render combo(k, v)}</div>
            {/each}
          </div>
          <div class="panel p4">
            <div class="note n1">Select whether all buildings or only those located in an area/polygon should be<br />taken into account by toggling the checkbox and selecting a polygon file.</div>
            <div class="arow"><i class="cb on"></i><span>Area</span>{@render combo('pg', 'area [EPSG:25832]')}</div>
          </div>
          <div class="panel p5">
            <div class="note n2">Set directories for the net GIS file and the result excel file</div>
            <div class="orow"><span>Net Output</span><div class="inp">C:/Users/Lars_Goray/Desktop/example/net.gpkg</div><b>...</b></div>
            <div class="orow"><span>Result Output</span><div class="inp">C:/Users/Lars_Goray/Desktop/example/result.xlsx</div><b>...</b></div>
          </div>
          <div class="panel p6">
            <div class="note n3">A temperature profile is needed to create the load profile. You can choose your own<br />temperature data by ticking the box and choosing a file. Check the F|Heat<br />documentation for the correct data structure. Alternatively a standard example<br />temperature profile from weather station 'Münster/Osnabrück' will be used.</div>
            <div class="trow"><i class="cb"></i><span>Use own temperature data for load curve</span><div class="inp"></div><b>...</b></div>
          </div>
          <div class="brow"><span>1.</span><b>Start Network Analysis</b><span>2.</span><b>Create Result File</b></div>
          <div class="progress">100%</div>
          <div class="done">Completed</div>
        </div>
      </div>
      <div class="scroll"><b><i class="up"></i></b><em></em><b><i class="caret"></i></b></div>
    </div>
  </section>
</div>

<style>
  :global(body) { margin: 0; overflow: hidden; }
  .app, .app * { box-sizing: border-box; }
  .app { position: relative; width: 1920px; height: 1032px; background: #efefef; color: #000; font: 12px/18px "Noto Sans", "Open Sans", sans-serif; letter-spacing: -.38px; display: flex; flex-direction: column; overflow: hidden; white-space: nowrap; }
  .ic { width: 24px; height: 24px; flex: none; overflow: visible; }
  .title { height: 23px; background: #f3f3f3; display: flex; align-items: center; color: #868686; padding-left: 2px; flex: none; }
  .logo { width: 16px; height: 16px; }
  .title .logo { margin-top: -1px; }
  .tt { margin-left: 7px; flex: 1; font-size: 12px; letter-spacing: -.5px; }
  .win { width: 110px; height: 14px; margin: -3px 12px 0 0; fill: none; stroke: #8a8a8a; }
  .menubar { height: 20px; display: flex; align-items: center; padding-left: 11px; color: #979797; letter-spacing: -.55px; flex: none; }
  .menubar span { flex: none; }
  u { text-underline-offset: 2px; text-decoration-thickness: 1px; }
  .toolbar { height: 39px; flex: none; display: flex; align-items: center; background: linear-gradient(#fbfbfb, #ececec); border-top: 1px solid #b9b9b9; }
  .toolbar.last { height: 39px; }
  .handle { width: 16px; height: 18px; flex: none; background: radial-gradient(circle, #b0b0b0 .8px, transparent 1px) 0 0 / 3px 3px; background-clip: content-box; padding: 0 5px 0 7px; }
  .handle.first { width: 12px; padding: 0 4px; }
  .sep { width: 1px; margin: 0 3px; height: 19px; background: #cfcfcf; flex: none; }
  .tool { width: 33px; height: 31px; flex: none; display: flex; align-items: center; justify-content: center; position: relative; }
  .tool .ic { width: 23px; height: 23px; }
  .tool.menu { width: 45px; justify-content: flex-start; padding-left: 5px; }
  .tool.menu .caret { margin-left: 7px; }
  .tool.off .ic { opacity: .46; filter: grayscale(.55); }
  .tool.on::before { content: ""; position: absolute; inset: 0 1px; border: 1px solid #b3b3b3; border-radius: 3px; background: #dadada; }
  .tool.on .ic { position: relative; }
  .caret { width: 0; height: 0; border: 3.500px solid transparent; border-top: 4px solid #555; border-bottom: 0; flex: none; }
  .off .caret { border-top-color: #999; }
  .up { width: 0; height: 0; border: 3.500px solid transparent; border-bottom: 4px solid #555; border-top: 0; }
  .tick { position: absolute; right: 2px; bottom: 3px; border: 2.500px solid transparent; border-top: 3px solid #444; border-bottom: 0; }
  .field { height: 21px; border: 1px solid #b3b3b3; border-radius: 2px; background: #fff; display: flex; align-items: center; padding: 0 4px; flex: none; }
  .field > span { flex: 1; }
  .tol { width: 80px; margin-left: 1px; font-size: 10.500px; padding-right: 3px; }
  .tol svg:first-of-type { width: 13px; height: 11px; margin-right: 13px; fill: #a0a0a0; }
  .tol .w { stroke: #fff; stroke-width: 1.500; }
  .updown { width: 7px; height: 12px; fill: #555; }
  .unit { width: 83px; margin: 0 2px; background: linear-gradient(#fdfdfd, #ececec); font-size: 11px; padding-right: 7px; }
  .main { flex: 1; display: flex; min-height: 0; border-top: 2px solid #b8b8b8; }
  aside { width: 258px; flex: none; display: flex; flex-direction: column; }
  .phead { display: flex; justify-content: space-between; align-items: center; width: 252px; height: 19px; padding: 0 2px 0 4px; flex: none; }
  aside > .phead:first-child { height: 17px; }
  .phead svg { width: 26px; height: 12px; fill: none; stroke: #555; }
  .phead .x { stroke-width: 2; }
  .ptools { height: 31px; display: flex; align-items: center; padding-left: 8px; gap: 9px; flex: none; }
  .ptools .ic { width: 16px; height: 16px; }
  .ptools.lay .caret { margin: 0 -1px 0 -1px; }
  .tree { width: 252px; border: 1px solid #b5b5b5; background: #fff; flex: none; overflow: hidden; }
  .browser { height: 368px; display: flex; }
  .rows { flex: 1; overflow: hidden; padding-top: 1px; }
  .row { height: 18px; display: flex; align-items: center; padding-left: 6px; }
  .row .ic { width: 16px; height: 16px; margin: 0 6px 0 6px; }
  .row.deep .ic { margin-left: 22px; }
  .row.sel { background: #efefef; width: 206px; }
  .row span { margin-left: -1px; }
  .tri { width: 7px; height: 7px; flex: none; }
  .tri.r { border: 4px solid transparent; border-left: 5px solid #666; border-right: 0; width: 0; height: 0; margin-right: 2px; }
  .tri.d { border: 3.500px solid transparent; border-top: 4px solid #555; border-bottom: 0; width: 0; height: 0; }
  .scroll { width: 15px; background: #fcfcfc; border-left: 1px solid #bdbdbd; display: flex; flex-direction: column; flex: none; }
  .scroll b { height: 14px; display: flex; align-items: center; justify-content: center; border-bottom: 1px solid #bbb; background: #f6f6f6; flex: none; }
  .scroll em { flex: 1; background: linear-gradient(#fcfcfc 0 83%, #b5b5b5 83% 83.300%, #dedede 83.300%); }
  .split { height: 7px; flex: none; background: radial-gradient(circle, #aaa .8px, transparent 1px) 0 0 / 3px 3px; background-clip: content-box; padding: 2px 114px 2px 119px; }
  .layers { flex: 1; padding-top: 1px; }
  .lrow { height: 18px; display: flex; align-items: center; padding-left: 7px; }
  .lv1 { padding-left: 27px; }
  .lv2 { padding-left: 47px; }
  .lrow.selected { background: #efefef; }
  .check { width: 14px; height: 14px; fill: #fff; stroke: #b8b8b8; flex: none; }
  .check path { fill: none; stroke: #000; stroke-width: 1.800; }
  .lrow .check { margin: 0 6px 0 9px; }
  .sym { width: 16px; height: 16px; margin-right: 6px; flex: none; overflow: visible; }
  .it { color: #7d7d7d; font-style: italic; font-weight: 700; letter-spacing: -.3px; }
  .b, .bu { font-weight: 700; letter-spacing: -.52px; }
  .bu span { text-decoration: underline; }
  .map { flex: 1; background: #fff; border-left: 1px solid #b0b0b0; border-right: 1px solid #b0b0b0; overflow: hidden; }
  .map svg { display: block; width: 1660px; height: 841px; }
  .net, .old { fill: none; vector-effect: non-scaling-stroke; }
  .net { stroke: #0600ff; stroke-width: 1.950; }
  .old { stroke: #9c9780; stroke-width: 1.100; }
  footer { height: 29px; flex: none; border-top: 1px solid #b5b5b5; display: flex; align-items: center; justify-content: space-between; padding: 0 0 0 4px; font-size: 11px; }
  .loc { width: 200px; padding-left: 8px; color: #777; letter-spacing: .04px; font-size: 10.500px; }
  .loc svg { width: 13px; height: 13px; fill: none; stroke: #777; margin-right: 7px; }
  .status { display: flex; align-items: center; letter-spacing: -.3px; width: 815px; }
  .status > * { flex: none; }
  .s1 { width: 56px; } .coord { width: 119px; padding-left: 6px; } .mouse { width: 16px; height: 16px; margin: 0 14px 0 4px; }
  .s2 { width: 28px; } .scale { width: 77px; padding: 0 0 0 4px; margin-right: 12px; }
  .scale b { width: 20px; height: 19px; border-left: 1px solid #b3b3b3; display: flex; align-items: center; justify-content: center; }
  .lock { width: 12px; height: 15px; margin-right: 9px; } .s3 { width: 48px; } .mag { width: 81px; margin-right: 9px; }
  .s4 { width: 50px; } .rotn { width: 81px; margin-right: 6px; } .s5 { width: 36px; margin-left: 5px; }
  .crs { width: 16px; height: 16px; margin: 0 2px 0 14px; } .s6 { width: 83px; } .msg { width: 16px; height: 15px; }

  .dialog { position: absolute; left: 267px; top: 170px; width: 593px; height: 828px; border-radius: 8px; background: #00202c; box-shadow: 0 0 1px 1px rgba(0, 0, 0, .22), 0 14px 34px rgba(0, 0, 0, .38); color: #f2f6f6; overflow: clip; overflow-clip-margin: 60px; }
  .dialog header { height: 31px; background: #f3f3f3; border-radius: 8px 8px 0 0; display: flex; align-items: center; color: #868686; padding: 0 10px 0 8px; letter-spacing: -.45px; }
  .dialog header span { flex: 1; margin-left: 6px; }
  .close { width: 11px; height: 11px; fill: none; stroke: #858585; }
  .body { display: flex; height: 786px; padding: 11px 11px 0 20px; }
  .content { width: 539px; height: 775px; overflow: hidden; padding-top: 9px; }
  .dialog .scroll { margin-left: 9px; border: 0; width: 14px; height: 775px; background: #fff; }
  .dialog .scroll em { background: linear-gradient(#fff 0 95%, #e2e2e2 95%); }
  nav { display: flex; gap: 2px; padding-left: 1px; }
  nav span { height: 22px; line-height: 21px; border-radius: 5px 5px 0 0; border: 1px solid #1caaab; border-bottom: 0; background: #fff; color: #000; text-align: center; letter-spacing: -.08px; font-size: 12px; flex: none; display: flex; justify-content: center; }
  nav .active { background: #1caaab; color: #eafafa; }
  .t1 { width: 75px; } .t2 { width: 91px; } .t3 { width: 70px; } .t4 { width: 90px; } .t5 { width: 102px; }
  .pane { border: 2px solid #1caaab; border-radius: 4px 4px 0 0; height: 760px; padding: 9px 9px 0; }
  .panel { border: 1px solid #1c9fa4; border-radius: 5px; background: #01374b; margin-bottom: 7px; width: 517px; }
  .p1 { height: 60px; padding: 5px 4px; font-weight: 700; line-height: 16px; font-size: 12.500px; letter-spacing: .31px; }
  .p2 { height: 43px; display: flex; align-items: center; padding: 0 9px 1px; font: 13.900px "Liberation Sans", sans-serif; letter-spacing: 0; }
  .lb { width: 135px; } .second { width: 134px; margin-left: 27px; }
  .temp { width: 66px; height: 25px; border: 1px solid #1caaab; border-radius: 4px; background: #fff; color: #000; display: flex; align-items: center; font-size: 12.500px; letter-spacing: -.3px; overflow: hidden; }
  .temp span { width: 42px; padding-left: 2px; }
  .temp div { width: 22px; height: 24px; display: flex; flex-direction: column; }
  .temp i { flex: 1; background: #b50a22; border: 1px solid #111; border-radius: 4px; }
  .temp i + i { background: #1caaab; }
  .p3 { height: 144px; padding: 9px 10px 0 9px; font: 14px "Liberation Sans", sans-serif; letter-spacing: 0; }
  .crow { display: flex; align-items: center; height: 20px; margin-bottom: 6px; }
  .crow > span { width: 63px; font-size: 13.900px; }
  .crow.deep > span { width: 108px; padding-right: 6px; text-align: right; }
  .combo { flex: 1; height: 20px; background: #fff; border: 1px solid #1caaab; color: #000; display: flex; align-items: center; font: 14px "Liberation Sans", sans-serif; letter-spacing: 0; }
  .combo span { flex: 1; }
  .combo .lsym { width: 18px; height: 18px; margin-right: 4px; flex: none; }
  .combo b { width: 15px; height: 18px; border-right: 1px solid #666; border-bottom: 1px solid #666; display: flex; align-items: center; justify-content: center; }
  .note { border: 1px solid #1c9fa4; border-radius: 5px; line-height: 16px; padding: 5px 4px; letter-spacing: .17px; font-size: 12px; }
  .p4 { height: 90px; padding: 9px; }
  .n1 { height: 45px; padding-top: 4px; }
  .arow, .trow { display: flex; align-items: center; font-family: "Liberation Sans", sans-serif; font-size: 12px; letter-spacing: 0; }
  .arow { margin-top: 5px; height: 20px; }
  .arow > span { width: 32px; }
  .cb { width: 15px; height: 16px; margin: 0 7px 0 1px; border-radius: 5px; border: 1px solid #00202c; background: #fff; flex: none; }
  .cb.on { background: radial-gradient(#1ef0f0, #1c8f96 80%); }
  .p4 { margin-bottom: 6px; }
  .p5 { height: 106px; padding: 9px; }
  .n2 { height: 25px; padding: 0 4px; font: 13px/22px "Liberation Sans", sans-serif; letter-spacing: -.06px; margin-bottom: 6px; }
  .orow { height: 24px; margin-bottom: 7px; display: flex; align-items: center; font: 13.900px "Liberation Sans", sans-serif; letter-spacing: 0; }
  .orow > span { width: 92px; }
  .inp { flex: 1; height: 20px; line-height: 18px; border: 1px solid #1caaab; border-radius: 4px; background: #fff; color: #000; padding-left: 2px; margin-right: 1px; }
  .orow b, .trow b { width: 23px; height: 24px; margin-left: 6px; margin-right: 1px; border-radius: 8px; background: #1caaab; font: 700 13px/22px "Liberation Sans", sans-serif; text-align: center; border: 1px solid #0a4a58; flex: none; }
  .p6 { height: 139px; padding: 9px; }
  .n3 { height: 88px; }
  .trow { height: 24px; margin-top: 6px; letter-spacing: .02px; }
  .trow > span { width: 225px; }
  .brow { display: flex; align-items: center; height: 22px; font: 14px "Liberation Sans", sans-serif; letter-spacing: 0; }
  .brow b { height: 22px; line-height: 22px; width: 226px; text-align: center; background: #1caaab; border-radius: 8px; font-size: 13.900px; flex: none; }
  .brow span { width: 27px; }
  .brow span:nth-of-type(2) { width: 26px; padding-left: 7px; }
  .progress { margin-top: 7px; width: 517px; height: 20px; border: 1px solid #aaa; border-radius: 1px; background: linear-gradient(#fff, #eee); color: #000; text-align: center; font-size: 10px; line-height: 18px; letter-spacing: -.1px; }
  .done { width: 517px; text-align: center; color: #00f000; font: 14px/18px "Liberation Sans", sans-serif; margin-top: 9px; letter-spacing: 0; }
</style>
